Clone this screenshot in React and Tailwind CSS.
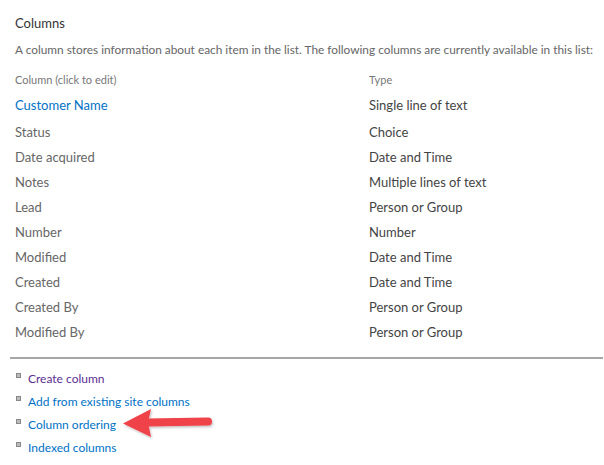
import React from "react";

const rows = [
  ["Customer Name", "Single line of text", true],
  ["Status", "Choice"],
  ["Date acquired", "Date and Time"],
  ["Notes", "Multiple lines of text"],
  ["Lead", "Person or Group"],
  ["Number", "Number"],
  ["Modified", "Date and Time"],
  ["Created", "Date and Time"],
  ["Created By", "Person or Group"],
  ["Modified By", "Person or Group"],
];

const links = [
  ["Create column", "text-[#5c2d91]"],
  ["Add from existing site columns", "text-[#0072c6]"],
  ["Column ordering", "text-[#0072c6]"],
  ["Indexed columns", "text-[#0072c6]"],
];

function Arrow() {
  return (
    <svg
      className="absolute left-[104px] top-[-9px]"
      width="100"
      height="36"
      viewBox="0 0 100 36"
    >
      <defs>
        <filter id="sh" x="-20%" y="-40%" width="140%" height="180%">
          <feDropShadow dx="1" dy="1.5" stdDeviation="1.2" floodColor="#000" floodOpacity="0.25" />
        </filter>
      </defs>
      <g filter="url(#sh)">
        <path d="M27 18.5 L88 17.5" stroke="#f0424a" strokeWidth="8" strokeLinecap="round" fill="none" />
        <path d="M3 19.5 L31 5 L28 18.5 L31 33 Z" fill="#f0424a" />
      </g>
    </svg>
  );
}

export default function App() {
  return (
    <div className="w-[604px] h-[465px] bg-white overflow-hidden relative" style={{ fontFamily: 'Lato, "Open Sans", sans-serif' }}>
      <div className="pl-[15px] pr-[1px] pt-[13px]">
        <div className="text-[13px] leading-[20px] text-[#333]">Columns</div>
        <div className="mt-[8px] text-[11.85px] leading-[18px] text-[#666] whitespace-nowrap">
          A column stores information about each item in the list. The following columns are currently available in this list:
        </div>
        <div className="mt-[12px] flex text-[11px] leading-[18px] text-[#777]">
          <div className="w-[354px]">Column (click to edit)</div>
          <div>Type</div>
        </div>
        <div className="mt-[4px]">
          {rows.map(([name, type, link], i) => (
            <div
              key={i}
              className={`flex text-[13px] leading-[25px] ${i === 0 ? "h-[27px]" : "h-[25px]"}`}
            >
              <div className={`w-[354px] ${link ? "text-[#0072c6]" : "text-[#666]"}`}>{name}</div>
              <div className="text-[#444]">{type}</div>
            </div>
          ))}
        </div>
      </div>
      <div className="mt-[12px] ml-[10px] mr-[1px] h-[2px] bg-[#a6a6a6]"></div>
      <ul className="mt-[8px] pl-[16px]">
        {links.map(([label, color], i) => (
          <li key={i} className="relative flex items-center h-[23px]">
            <span className="w-[5px] h-[5px] bg-[#bbb] border border-[#888] mr-[7px] mt-[-6px]"></span>
            <span className={`text-[12px] ${color}`}>{label}</span>
            {i === 2 && <Arrow />}
          </li>
        ))}
      </ul>
    </div>
  );
}
